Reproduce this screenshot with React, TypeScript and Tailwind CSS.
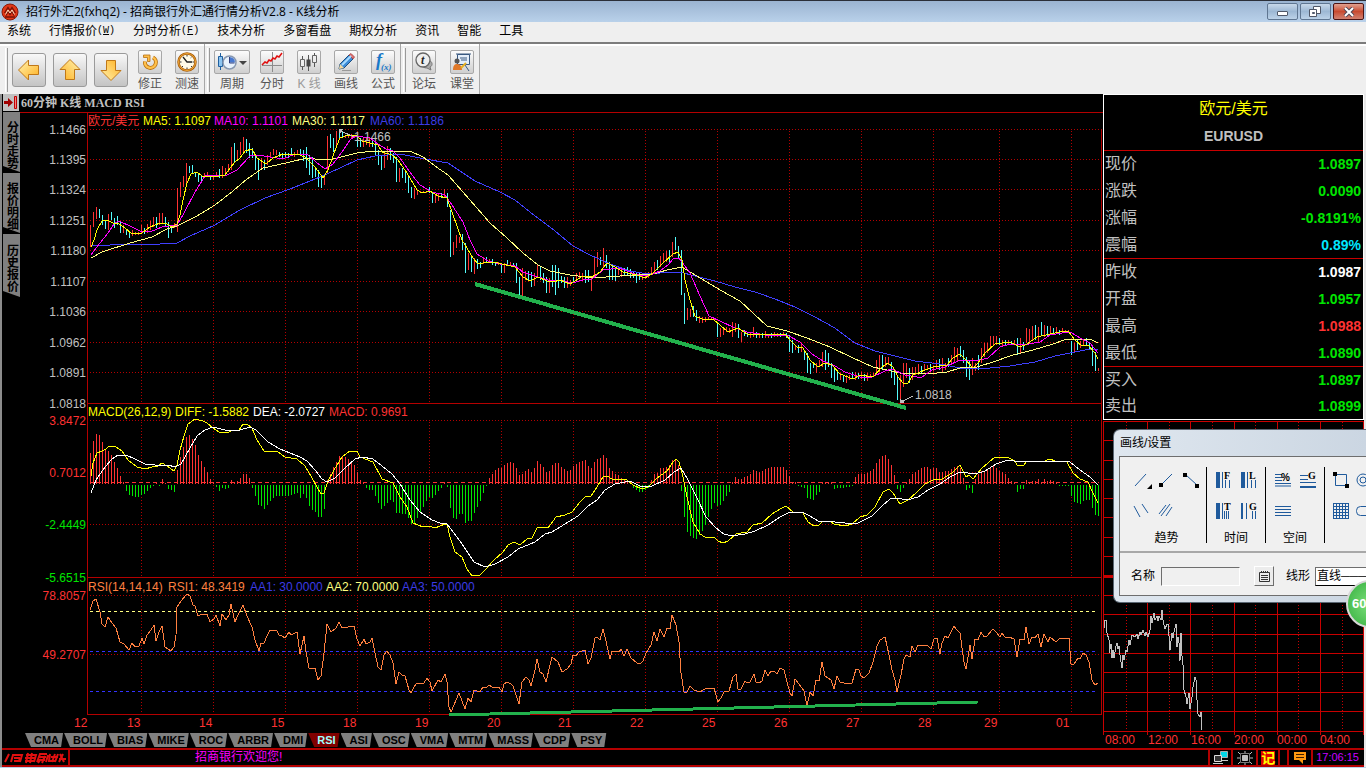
import type { ReactNode } from "react";
import clsx from "clsx";

const SANS = "font-['Liberation_Sans','Noto_Sans_CJK_SC',sans-serif]";

const menus = [
  { label: "系统" },
  { label: "行情报价", hotkey: "W" },
  { label: "分时分析", hotkey: "F" },
  { label: "技术分析" },
  { label: "多窗看盘" },
  { label: "期权分析" },
  { label: "资讯" },
  { label: "智能" },
  { label: "工具" },
];
const sideTabs = ["分时走势", "报价明细", "历史报价"];
const indicators = ["CMA", "BOLL", "BIAS", "MIKE", "ROC", "ARBR", "DMI", "RSI", "ASI", "OSC", "VMA", "MTM", "MASS", "CDP", "PSY"];

const quotes = [
  [
    { label: "现价", value: "1.0897", color: "text-[#00e600]" },
    { label: "涨跌", value: "0.0090", color: "text-[#00e600]" },
    { label: "涨幅", value: "-0.8191%", color: "text-[#00e600]" },
    { label: "震幅", value: "0.89%", color: "text-[#00e6ff]" },
  ],
  [
    { label: "昨收", value: "1.0987", color: "text-white" },
    { label: "开盘", value: "1.0957", color: "text-[#00e600]" },
    { label: "最高", value: "1.0988", color: "text-[#ff3232]" },
    { label: "最低", value: "1.0890", color: "text-[#00e600]" },
  ],
  [
    { label: "买入", value: "1.0897", color: "text-[#00e600]" },
    { label: "卖出", value: "1.0899", color: "text-[#00e600]" },
  ],
];

// hourly bars, one every 3 units: r = up, c = down, then high-low
const bars: [number, string][] = [
  [90, "r225-247 r212-227 r207-219 c209-218 c215-225 c220-229 r214-230 c212-220 c218-228 c216-225 c222-233 r225-233 c230-235 c232-238 r230-236 r232-235 r232-235 r225-233 c228-234 r224-233 r221-230 r217-227 c217-228 r213-225 r213-223 c217-227 c222-238 c225-233 r223-228 r188-232"],
  [180, "r182-197 r176-187 r163-187 c166-173 c165-173 c172-177 c173-182 c175-182 r173-178 r172-177 c175-180 r175-180 r172-177 c169-178 r166-178 r168-175 r164-172 r147-170 c143-163 r150-160 r142-155 r137-153 c139-153 c143-158 c148-158 c155-170 c160-180 r158-170 c160-170 r155-165"],
  [270, "r152-158 r149-155 r150-155 c152-157 c153-158 c152-158 c153-158 c148-155 r152-157 r150-155 c149-155 c150-161 c147-168 c155-175 c157-178 c167-177 c170-187 c175-188 r177-185 r136-173 c134-148 c138-152 r131-146 c130-140 c132-138 r135-138 r134-138 r134-138 r135-138 c137-147"],
  [360, "c138-147 r137-147 r138-145 r138-147 c139-147 c143-155 c150-165 c155-170 r153-168 r146-160 c148-160 c153-163 c157-182 r168-182 c168-178 c172-183 c175-193 c187-198 r188-199 r190-195 r191-193 r191-193 r191-193 c187-193 c192-203 r195-203 r194-201 c193-198 r189-198 c193-207"],
  [450, "c210-257 r242-255 r235-248 r237-243 c234-250 c243-273 r253-270 c257-272 r258-274 c259-269 c262-268 r257-264 c257-263 r259-263 c259-265 c262-266 r262-265 c263-273 r263-273 c260-265 r262-266 c263-267 c263-283 c277-296 r268-297 r271-280 c271-281 c272-287 r273-286 r265-277"],
  [540, "c266-280 c273-283 c277-293 r278-293 c265-287 c265-295 c268-288 c276-283 c277-288 r277-288 r280-286 c277-283 r273-280 r272-279 r273-280 c270-283 c270-282 r278-291 r258-277 r252-267 c257-265 r248-268 c255-268 c262-280 c265-280 c268-281 r268-275 r267-277 c268-276 c267-275"],
  [630, "c269-278 c272-278 c273-283 c273-280 r275-280 r275-279 r272-278 r267-275 r262-273 c260-270 r256-267 r253-263 r251-262 c250-262 r242-257 c237-250 c246-258 c250-295 c293-324 r308-320 r309-317 c306-317 c310-321 r316-323 r317-323 r317-322 r317-320 r318-320 r318-320 c324-337"],
  [720, "r328-337 r327-335 r327-332 r328-333 r322-337 r323-332 c324-338 r332-342 c330-336 c332-337 r333-338 r327-337 c332-338 r333-338 c333-338 r331-338 r334-338 c333-338 r332-337 r333-337 c333-337 r332-336 c333-338 c335-352 c340-353 r345-350 c345-353 r343-352 c350-360 c353-373"],
  [810, "c363-374 c362-368 r363-373 r360-367 r352-367 c350-370 c353-367 c363-378 c367-382 c370-380 r373-380 c375-382 r375-383 r375-380 c372-378 r372-380 c373-379 r372-379 c374-381 r373-381 r374-378 r373-377 r360-375 r355-372 c355-370 r357-367 r357-365 c362-378 c372-385 c377-400"],
  [900, "r375-402 r363-387 r363-378 c368-383 r367-380 r367-375 r364-375 c366-374 r364-370 r365-369 c364-370 r366-371 r360-368 c359-370 r358-372 r363-370 c358-367 r355-365 r347-363 r348-362 c346-357 c350-363 c357-377 c360-380 r358-375 r363-371 c355-370 r348-363 r343-357 r343-353"],
  [990, "r336-347 r336-346 r336-345 c338-345 r340-346 c340-345 r340-345 c341-345 r340-345 c338-355 r338-353 c342-350 r328-343 r329-344 r326-340 c325-340 r327-342 c322-335 r325-337 c326-337 r326-335 c328-335 r327-334 c330-335 r328-333 r330-333 r330-333 c341-355 r343-353 c340-350"],
  [1080, "r341-348 r340-346 c338-345 c342-350 c345-366 c352-371 r368-371"],
];

// MACD column ends, baseline at 484: smaller is above (red), larger is below (green)
const macd =
  "453 441 434 435 442 450 451 455 462 468 476 482 490 494 495 496 496 494 493 490 487 485 482 485 479 483 488 489 491 470 457 447 437 435 439 445 455 461 467 472 479 482 486 490 487 488 487 480 482 481 478 474 474 478 487 495 504 505 508 504 500 497 495 495 495 495 495 494 493 492 497 493 497 505 509 511 516 516 508 480 474 467 462 456 456 457 459 462 465 472 480 482 487 489 489 495 502 508 505 502 499 501 512 512 513 513 517 523 522 517 512 506 500 496 497 494 490 487 482 486 507 517 518 513 513 522 520 520 512 506 500 492 485 478 474 470 468 468 465 463 462 463 468 475 474 471 469 472 468 461 464 467 472 471 465 463 463 467 469 471 470 466 464 462 461 460 466 468 462 459 458 455 458 468 471 474 475 478 480 481 482 487 489 491 491 489 487 480 474 473 468 468 467 465 460 459 465 490 516 531 535 537 538 534 530 524 516 508 502 505 504 500 495 491 482 477 479 479 477 476 474 470 471 472 471 469 468 467 467 467 467 467 470 476 482 482 485 486 487 497 498 499 494 491 482 482 482 482 488 487 487 487 486 486 485 477 474 474 474 473 471 469 463 459 456 455 459 465 475 488 491 487 482 479 474 472 470 468 467 467 469 468 468 472 472 471 471 469 467 466 468 478 489 487 492 479 474 471 471 470 468 466 468 471 472 474 478 481 483 491 488 488 480 482 481 481 479 482 479 481 480 481 482 485 485 485 485 495 501 502 503 500 499 499 507 514 515"
    .split(" ")
    .map(Number);

const MA5 =
  "91,247 94,240 97,230 102,221 107,220 113,223 119,224 125,228 132,234 142,233 150,227 160,223 167,224 172,227 177,224 180,215 183,200 187,183 191,174 197,172 202,176 213,177 225,175 230,168 235,162 240,158 245,151 252,149 257,158 266,164 273,158 283,154 297,154 305,157 315,167 323,178 328,170 337,145 340,138 348,135 357,136 362,141 370,143 378,145 382,152 392,155 398,160 407,173 417,190 422,193 430,191 438,196 447,198 452,212 462,240 473,258 478,264 488,262 498,263 515,267 523,277 530,281 538,277 547,281 553,282 560,280 570,284 583,276 592,277 600,272 607,263 615,267 623,272 637,275 645,278 653,273 663,263 673,254 678,252 682,260 685,280 690,300 695,316 702,319 713,319 720,325 728,332 738,328 747,334 763,335 785,334 790,340 797,347 803,348 810,360 818,367 825,363 832,365 840,374 853,379 860,375 873,377 882,367 888,363 893,367 898,377 903,383 908,383 913,375 925,370 933,367 947,365 953,358 960,354 965,359 973,368 978,363 985,353 995,344 1010,342 1020,347 1027,344 1037,337 1050,334 1060,332 1068,331 1075,340 1082,346 1088,345 1095,353 1098,359";
const MA10 =
  "91,255 100,243 108,233 114,224 119,221 130,226 140,231 150,232 162,227 177,225 184,213 195,192 205,176 215,175 225,176 237,170 250,156 258,155 270,157 283,159 295,154 308,155 316,162 325,169 333,164 342,152 350,140 355,136 370,138 378,144 386,149 393,151 400,158 412,175 420,185 432,192 445,195 452,205 463,222 470,240 477,254 488,261 500,264 515,266 523,272 535,276 548,280 560,280 572,283 583,280 592,279 603,270 620,268 632,273 642,276 650,275 660,271 668,265 673,259 679,258 690,273 700,296 709,316 720,321 735,328 747,332 765,335 787,335 800,342 812,354 823,361 835,366 845,372 860,377 872,377 885,371 892,369 905,375 917,377 922,377 932,370 945,367 960,360 975,361 988,358 1000,347 1010,344 1023,345 1040,342 1050,335 1062,333 1070,332 1082,339 1090,343 1098,353";
const MA30 =
  "91,258 102,252 130,243 152,237 167,229 177,226 197,216 215,205 233,191 247,179 263,168 277,165 290,162 307,158 323,160 333,159 357,153 373,151 390,151 410,151 423,157 435,166 448,175 470,200 490,223 507,238 523,253 538,265 550,271 570,275 593,278 620,276 653,274 667,270 682,267 690,272 707,282 720,290 740,301 753,313 767,326 787,331 807,338 830,347 853,358 873,367 900,373 927,374 947,372 960,368 977,367 993,362 1013,355 1033,350 1053,344 1067,339 1090,339 1098,343";
const MA60 =
  "91,245 110,245 120,244 140,245 160,244 177,243 190,236 215,225 240,210 265,198 290,189 320,177 340,168 357,160 375,156 400,154 425,159 448,163 475,181 500,192 515,200 530,212 555,231 573,246 590,255 610,264 630,271 648,274 660,273 680,272 695,276 715,281 735,287 755,292 775,299 795,307 815,317 835,328 855,343 875,351 895,356 915,361 940,364 960,368 990,368 1010,366 1035,362 1055,356 1070,353 1085,350 1098,349";
const DIFF =
  "91,476 93,463 97,453 102,451 106,449 109,446 116,447 122,451 128,460 137,467 145,469 152,467 158,466 162,463 167,466 174,471 177,465 180,450 184,436 188,424 195,419 203,421 207,423 213,428 219,432 228,433 232,430 239,430 243,424 247,424 252,428 257,440 264,451 277,451 285,457 297,459 305,466 312,478 317,487 321,494 324,493 328,481 334,470 342,457 350,451 357,451 360,457 373,462 382,479 393,483 400,497 407,507 413,523 423,527 429,526 435,528 445,524 447,524 450,537 455,552 462,557 467,569 472,576 480,575 487,568 493,561 503,552 508,545 514,542 520,545 527,539 532,538 537,528 543,527 548,528 556,517 565,515 572,512 580,502 586,496 591,496 597,487 603,477 607,476 612,479 627,480 633,485 642,489 648,487 657,478 667,471 673,462 676,459 679,462 683,477 687,497 693,522 700,534 705,537 714,537 718,541 723,543 728,541 736,534 747,532 753,525 762,523 772,514 780,509 786,506 793,512 803,513 808,522 814,526 819,525 823,521 830,521 834,524 845,526 852,524 860,517 867,515 875,507 883,492 889,489 893,493 900,504 908,500 917,492 925,484 933,480 942,479 952,473 960,465 966,477 969,475 973,479 982,468 988,463 995,457 1007,457 1015,461 1017,465 1024,465 1027,461 1038,461 1042,462 1050,459 1055,461 1067,462 1073,473 1080,479 1088,482 1093,493 1098,503";
const DEA =
  "91,493 96,480 105,467 112,459 118,455 126,455 135,459 145,464 155,465 168,465 175,467 181,464 190,448 197,436 205,430 213,427 225,430 232,431 240,430 250,427 256,430 268,442 280,449 290,453 300,457 307,461 315,470 322,479 327,482 335,478 345,468 355,459 362,457 373,459 382,466 392,474 400,484 410,500 420,512 432,520 440,523 447,524 460,541 474,562 485,567 495,564 508,557 518,549 535,542 545,534 552,532 565,524 578,516 588,506 597,500 605,490 615,484 630,481 640,486 652,486 665,480 674,472 681,468 688,480 698,500 706,517 716,528 724,534 732,536 745,534 755,531 768,525 780,517 790,512 802,512 810,516 818,521 835,522 845,523 858,523 872,516 882,506 890,499 897,498 907,500 918,497 928,490 940,484 950,477 960,472 975,474 985,471 996,464 1008,460 1020,462 1040,461 1055,461 1070,462 1080,470 1090,477 1098,485";
const RSI =
  "90,610 93,601 96,599 100,612 102,624 105,627 108,617 112,623 116,628 120,642 124,644 129,650 132,643 135,647 139,646 142,638 144,644 147,635 151,630 154,625 156,641 159,632 162,626 165,647 171,651 174,647 176,635 177,607 181,601 187,594 190,596 193,605 195,606 198,616 202,614 207,614 210,622 214,619 216,615 220,626 222,614 226,620 229,615 231,604 235,622 237,617 240,611 243,605 247,616 252,627 255,640 259,651 261,643 264,643 267,636 270,630 277,631 279,635 282,636 285,638 289,632 291,635 297,632 300,654 304,636 306,652 309,668 315,668 318,680 321,676 324,653 327,624 331,632 336,628 339,622 342,628 354,626 357,639 360,646 364,639 366,644 370,642 372,638 375,653 378,667 381,670 384,655 387,651 390,655 393,663 396,684 399,672 402,675 405,676 409,690 411,693 414,687 417,683 424,683 427,678 430,682 432,691 438,680 441,682 445,674 447,682 449,707 451,712 454,705 459,693 465,709 468,698 471,702 474,690 480,692 483,687 486,688 489,685 492,687 499,687 502,692 504,684 507,682 511,684 513,686 519,704 522,682 526,677 529,680 531,686 535,670 537,659 540,672 543,674 546,682 552,657 558,662 562,672 567,669 571,664 573,655 576,656 579,652 585,650 588,664 591,658 595,638 597,637 600,640 603,629 606,641 610,659 612,651 619,652 621,649 624,656 627,649 631,658 637,663 640,664 643,661 646,653 651,645 654,632 657,641 660,629 664,637 667,628 670,629 672,615 676,625 679,642 681,673 684,692 687,692 690,686 694,690 700,692 705,689 714,688 718,702 721,698 724,692 729,691 733,677 736,674 738,689 741,689 745,681 747,683 750,682 754,674 756,682 759,683 762,681 765,670 768,676 771,671 774,671 777,674 780,668 784,670 787,682 790,693 792,696 795,679 799,684 804,691 807,706 810,692 813,696 816,680 819,681 822,662 825,676 831,680 834,689 837,676 840,682 844,683 852,683 856,669 859,670 861,676 864,678 869,673 873,662 877,646 880,640 885,637 889,655 892,670 895,680 897,692 901,675 904,659 906,655 910,657 912,646 915,652 918,645 923,645 927,645 931,649 934,639 937,638 940,654 942,643 945,636 948,638 954,626 957,630 960,633 964,662 966,669 970,645 972,659 975,639 978,640 981,632 984,637 987,636 993,629 996,632 1000,637 1002,633 1005,637 1009,637 1014,639 1017,657 1020,639 1024,640 1026,627 1029,644 1032,637 1035,638 1038,634 1041,647 1044,634 1048,642 1050,637 1056,642 1060,638 1069,638 1071,664 1074,664 1078,658 1080,659 1083,653 1086,655 1089,662 1092,680 1095,685 1098,683";
const DAY =
  "1104,628 1104,621 1106,620 1107,633 1109,640 1109,653 1111,644 1112,658 1113,650 1114,658 1116,646 1117,643 1118,649 1119,646 1120,655 1122,668 1123,655 1124,660 1126,650 1127,652 1129,640 1130,645 1132,635 1135,637 1137,634 1138,639 1140,632 1141,635 1143,630 1145,636 1146,632 1148,637 1150,630 1151,616 1152,623 1154,613 1155,620 1157,616 1158,621 1159,616 1161,620 1162,610 1163,620 1165,629 1167,624 1168,624 1169,636 1170,650 1172,633 1173,638 1174,632 1176,624 1177,647 1178,637 1179,643 1180,661 1181,633 1182,656 1183,665 1184,690 1186,697 1187,704 1189,693 1190,709 1192,697 1193,687 1195,677 1196,680 1197,700 1198,714 1200,717 1201,712 1202,730";

const days: [number, string][] = [
  [74, "12"], [127, "13"], [199, "14"], [271, "15"], [343, "18"], [415, "19"], [487, "20"], [558, "21"],
  [630, "22"], [702, "25"], [774, "26"], [846, "27"], [918, "28"], [984, "29"], [1056, "01"],
];
const dayLines = [141, 213, 285, 357, 429, 501, 573, 645, 717, 789, 861, 933, 999, 1071];
const prices: [number, string][] = [
  [129, "1.1466"], [159, "1.1395"], [189, "1.1324"], [220, "1.1251"], [250, "1.1180"],
  [281, "1.1107"], [311, "1.1036"], [342, "1.0962"], [372, "1.0891"], [403, "1.0818"],
];

function Label({ x, y, fill, end, children }: { x: number; y: number; fill: string; end?: boolean; children: ReactNode }) {
  return (
    <text x={x} y={y} fill={fill} textAnchor={end ? "end" : "start"}>
      {children}
    </text>
  );
}

function Charts() {
  return (
    <svg viewBox="20 113 1083 620" className={clsx("block w-full text-[12px]", SANS)}>
      <g stroke="#b40000" shapeRendering="crispEdges" fill="none">
        <g strokeDasharray="1 2">
          {prices.slice(0, 9).map(([y]) => (
            <path key={y} d={`M90 ${y + 0.5}H1099`} />
          ))}
          {[420, 472, 524, 595, 654].map((y) => (
            <path key={y} d={`M90 ${y + 0.5}H1099`} />
          ))}
          {dayLines.map((x) => (
            <path key={x} d={`M${x + 0.5} 131V403M${x + 0.5} 422V577M${x + 0.5} 597V714`} />
          ))}
        </g>
        <path d="M87.5 113V714.5H1101.5V129M88 403.5H1101M88 577.5H1101" />
      </g>

      <g shapeRendering="crispEdges">
        {bars.map(([start, list]) =>
          list.split(" ").map((bar, i) => {
            const [hi, lo] = bar.slice(1).split("-").map(Number);
            return (
              <rect key={start + i * 3} x={start + i * 3} y={hi} width="1" height={lo - hi} fill={bar[0] === "r" ? "#ff3232" : "#54fcfc"} />
            );
          })
        )}
        {macd.map((y, i) => (
          <rect key={i} x={90 + i * 3} y={Math.min(y, 485)} width="1" height={y < 485 ? 484 - y : y - 484} fill={y < 485 ? "#ff3232" : "#00e600"} />
        ))}
        <path d="M90 482.5H1099" stroke="#ff3232" strokeDasharray="4 3" />
        <path d="M90 611.5H1096" stroke="#ffff80" strokeDasharray="3 3" />
        <path d="M90 651.5H1096M90 691.5H1096" stroke="#3232ff" strokeDasharray="3 3" />
        <g fill="none">
          <polyline points={MA60} stroke="#4040ff" />
          <polyline points={MA30} stroke="#ffff80" />
          <polyline points={MA10} stroke="#ff00ff" />
          <polyline points={MA5} stroke="#ffff00" />
          <polyline points={DIFF} stroke="#ffff00" />
          <polyline points={DEA} stroke="#ffffff" />
          <polyline points={RSI} stroke="#ff8040" />
        </g>
        <g stroke="#22b14c">
          <path d="M475 284L906 408" strokeWidth="4" />
          <path d="M449 715L978 702" strokeWidth="3" />
        </g>
        <g stroke="#c0c0c0" fill="#c0c0c0">
          <path d="M341 131L354 137M901 402L913 396" />
          <path d="M339 129h4l-3 4zM900 399v4l4 -1z" />
        </g>
      </g>

      {prices.map(([y, t]) => (
        <Label key={t} x={86} y={y + 5} fill="#c0c0c0" end>
          {t}
        </Label>
      ))}
      <Label x={86} y={425} fill="#ff3232" end>3.8472</Label>
      <Label x={86} y={477} fill="#ff3232" end>0.7012</Label>
      <Label x={86} y={529} fill="#00e600" end>-2.4449</Label>
      <Label x={86} y={582} fill="#00e600" end>-5.6515</Label>
      <Label x={86} y={600} fill="#ff3232" end>78.8057</Label>
      <Label x={86} y={659} fill="#ff3232" end>49.2707</Label>

      <Label x={88} y={125} fill="#ff3232">欧元/美元</Label>
      <Label x={143} y={125} fill="#ffff00">MA5: 1.1097</Label>
      <Label x={214} y={125} fill="#ff00ff">MA10: 1.1101</Label>
      <Label x={292} y={125} fill="#ffff80">MA30: 1.1117</Label>
      <Label x={370} y={125} fill="#3c3ce6">MA60: 1.1186</Label>
      <Label x={354} y={141} fill="#c0c0c0">1.1466</Label>
      <Label x={915} y={399} fill="#c0c0c0">1.0818</Label>

      <Label x={88} y={416} fill="#ffff00">MACD(26,12,9)</Label>
      <Label x={175} y={416} fill="#ffff00">DIFF: -1.5882</Label>
      <Label x={253} y={416} fill="#ffffff">DEA: -2.0727</Label>
      <Label x={329} y={416} fill="#ff3232">MACD: 0.9691</Label>

      <Label x={88} y={591} fill="#ff8040">RSI(14,14,14)</Label>
      <Label x={168} y={591} fill="#ff8040">RSI1: 48.3419</Label>
      <Label x={250} y={591} fill="#3c3ce6">AA1: 30.0000</Label>
      <Label x={326} y={591} fill="#ffff80">AA2: 70.0000</Label>
      <Label x={402} y={591} fill="#3c3ce6">AA3: 50.0000</Label>

      {days.map(([x, t]) => (
        <Label key={t} x={x} y={727} fill="#ff3232">
          {t}
        </Label>
      ))}
    </svg>
  );
}

function DayChart() {
  return (
    <svg viewBox="1103 420 261 328" className={clsx("block w-full text-[12px]", SANS)}>
      <g stroke="#c80000" shapeRendering="crispEdges" fill="none">
        {[421, 440, 460, 479, 498, 517, 537, 556, 595, 614, 634, 653, 672, 692, 711, 731].map((y) => (
          <path key={y} d={`M1103 ${y + 0.5}H1364`} />
        ))}
        <path d="M1103 576H1364" strokeWidth="3" />
        {[1103, 1147, 1190, 1234, 1277, 1320, 1363].map((x) => (
          <path key={x} d={`M${x + 0.5} 421V735`} />
        ))}
        {[1126, 1169, 1212, 1255, 1298, 1342].map((x) => (
          <path key={x} d={`M${x + 0.5} 422V731`} strokeDasharray="1 2" />
        ))}
        <polyline points={DAY} stroke="#c0c0c0" />
      </g>
      {["08:00", "12:00", "16:00", "20:00", "00:00", "04:00"].map((t, i) => (
        <Label key={t} x={1105 + i * 43} y={744} fill="#ff3232">
          {t}
        </Label>
      ))}
    </svg>
  );
}

function WindowButton({ label, close, children }: { label: string; close?: boolean; children: ReactNode }) {
  return (
    <button
      aria-label={label}
      className={clsx(
        "flex h-[17px] w-[31px] items-center justify-center rounded-[2px] border",
        close
          ? "border-[#4c1414] bg-linear-to-b from-[#e0a090] via-[#c84a30] to-[#d08070]"
          : "border-[#5f7691] bg-linear-to-b from-[#c8d8e9] via-[#9db8d4] to-[#bcd2e8]"
      )}
    >
      {children}
    </button>
  );
}

function TitleBar() {
  return (
    <header className="flex h-[22px] items-center border-t border-[#2b2f38] bg-linear-to-b from-[#9bb4d1] to-[#b9d1ea] pl-px pr-[2px]">
      <svg width="18" height="18" viewBox="0 0 18 18" className="mr-[7px]">
        <circle cx="9" cy="9" r="8" fill="#e03818" stroke="#8a1a08" />
        <path d="M3.5 10L7 4.500L9 7.500L11 4.500L14.500 10M5 12.500L7 8.500L9 11.500L11 8.500L13 12.500M4 14H14" fill="none" stroke="#7a1206" strokeWidth="1.300" />
        <path d="M4.500 11.500L7 7L9 10L11 7L13.500 11.500" fill="none" stroke="#fbe0c0" strokeWidth="1" />
      </svg>
      <h1 className="flex-1 font-['Open_Sans','Noto_Sans_CJK_SC',sans-serif] text-[12px] leading-[20px] whitespace-nowrap text-black">
        招行外汇2(fxhq2) - 招商银行外汇通行情分析V2.8 - K线分析
      </h1>
      <div className="flex gap-[2px]">
        <WindowButton label="最小化">
          <span className="mt-1 h-[5px] w-[11px] rounded-[1px] border border-[#505868] bg-white" />
        </WindowButton>
        <WindowButton label="还原">
          <svg width="13" height="12" viewBox="0 0 13 12" fill="#fff" stroke="#505868">
            <path d="M4.500 0.500h7v7h-7z" />
            <path d="M0.500 3.500h7v7h-7z" />
            <path d="M3.500 6.500h2v1h-2z" fill="#9db8d4" />
          </svg>
        </WindowButton>
        <WindowButton label="关闭" close>
          <svg width="12" height="10" viewBox="0 0 12 10">
            <path d="M2 1L10 9M10 1L2 9" stroke="#504858" strokeWidth="4" />
            <path d="M2 1L10 9M10 1L2 9" stroke="#fff" strokeWidth="2" />
          </svg>
        </WindowButton>
      </div>
    </header>
  );
}

function ArrowButton({ label, rotate }: { label: string; rotate: string }) {
  return (
    <button aria-label={label} className="flex size-[34px] items-center justify-center rounded-[3px] border border-[#9a9a9a] bg-linear-to-b from-[#f8f8f8] to-[#c4c4c4]">
      <svg width="24" height="24" viewBox="0 0 24 24" className={rotate}>
        <defs>
          <linearGradient id={`arrow-${label}`} x1="0" y1="0" x2="1" y2="1">
            <stop offset="0" stopColor="#fff3b0" />
            <stop offset="1" stopColor="#ffb020" />
          </linearGradient>
        </defs>
        <path d="M1.500 12L11.500 2V7.500H21.500V16.500H11.500V22Z" fill={`url(#arrow-${label})`} stroke="#c07818" strokeLinejoin="round" />
      </svg>
    </button>
  );
}

function ToolButton({ label, wide, dim, children }: { label: string; wide?: boolean; dim?: boolean; children: ReactNode }) {
  return (
    <button className="flex flex-col items-center">
      <span
        className={clsx(
          "flex h-[24px] items-center justify-center rounded-[2px] border border-[#a8a8a8] bg-linear-to-b from-[#fcfcfc] to-[#cfcfcf]",
          wide ? "w-[36px]" : "w-[24px]"
        )}
      >
        {children}
      </span>
      <span className={clsx("pt-[2px] text-[12px] leading-[16px] whitespace-nowrap", dim ? "text-[#9a9a9a]" : "text-[#555]")}>{label}</span>
    </button>
  );
}

function Grip() {
  return <span className="h-[44px] w-[3px] border-r border-l border-r-[#9a9a9a] border-l-white" />;
}

function Toolbar() {
  return (
    <div className="flex h-[52px] border-t-2 border-[#7c7c7c] bg-[#efefef] pl-[2px] shadow-[inset_0_2px_0_#fff]">
      <div className="flex items-start border-r border-[#a8a8a8] pt-[4px] pr-[5px] pl-[3px]">
        <Grip />
        <div className="ml-[4px] flex gap-[7px] pt-[5px]">
          <ArrowButton label="后退" rotate="" />
          <ArrowButton label="向上" rotate="rotate-90" />
          <ArrowButton label="向下" rotate="-rotate-90" />
        </div>
        <div className="ml-[10px] flex gap-[13px] pt-[2px]">
          <ToolButton label="修正">
            <svg width="18" height="18" viewBox="0 0 18 18">
              <path d="M12 4.500a5.500 5.500 0 1 1 -8 4" fill="none" stroke="#b87010" strokeWidth="4" />
              <path d="M12 4.500a5.500 5.500 0 1 1 -8 4" fill="none" stroke="#ffc04a" strokeWidth="2.400" />
              <path d="M2.500 2h6.500v6.500H6.500V4.500H2.500z" fill="#ffc04a" stroke="#b87010" strokeWidth="0.800" />
            </svg>
          </ToolButton>
          <ToolButton label="测速">
            <svg width="20" height="20" viewBox="0 0 20 20">
              <circle cx="10" cy="10" r="8.500" fill="#fffbe8" stroke="#a85c08" strokeWidth="2.500" />
              <circle cx="10" cy="10" r="8.500" fill="none" stroke="#f0a838" />
              <path d="M6 5l4 5h5" fill="none" stroke="#222" strokeWidth="1.300" />
              <path d="M10 3v1.500M10 15.500V17M3 10h1.500M15.500 10H17M14.500 5l-.8.8M5 15l1-1M15 15l-1-1" stroke="#333" />
            </svg>
          </ToolButton>
        </div>
      </div>
      <div className="flex items-start border-r border-[#a8a8a8] pt-[4px] pr-[5px] pl-[2px]">
        <Grip />
        <div className="ml-[4px] flex pt-[2px]">
          <ToolButton label="周期" wide>
            <svg width="32" height="20" viewBox="0 0 32 20">
              <path d="M4.500 1v17" stroke="#2060a0" />
              <path d="M2.500 4.500h4v10h-4z" fill="#8cc4f0" stroke="#2060a0" />
              <circle cx="13.500" cy="10.500" r="6.500" fill="#e8f2fc" stroke="#8898b0" strokeWidth="1.500" />
              <path d="M13.500 10.500V5a5.500 5.500 0 0 1 5.500 5.500z" fill="#4878d0" />
              <path d="M13.500 5v6h5" stroke="#304080" fill="none" />
              <path d="M23 9h8l-4 4z" fill="#444" />
            </svg>
          </ToolButton>
          <div className="ml-[10px] flex gap-[13px]">
            <ToolButton label="分时">
              <svg width="22" height="22" viewBox="0 0 22 22">
                <path d="M11.500 1v20M1 14.500h20" stroke="#8c8c8c" />
                <path d="M1 14l3-3 2 1 2-3 2 1 2-3 2 1 2-3 2 1 3-4" fill="none" stroke="#e01010" strokeWidth="1.500" />
              </svg>
            </ToolButton>
            <ToolButton label="K 线" dim>
              <svg width="20" height="20" viewBox="0 0 20 20">
                <path d="M3.500 4v14M9.500 3v16M15.500 1v14" stroke="#555" />
                <path d="M1.500 7.500h4v7h-4zM13.500 3.500h4v7h-4z" fill="#eee" stroke="#666" />
                <path d="M7.500 7.500h4v7h-4z" fill="#444" />
              </svg>
            </ToolButton>
            <ToolButton label="画线">
              <svg width="20" height="20" viewBox="0 0 20 20">
                <path d="M4 12L13 3l4 4-9 9-5 1z" fill="#3c8cd8" stroke="#205080" />
                <path d="M13 3l2-1.500L18.500 5 17 7z" fill="#e07070" stroke="#a04040" strokeWidth="0.800" />
                <path d="M6 13l9-9" stroke="#a8dcff" strokeWidth="2" />
                <path d="M4 12l4 4-5 1z" fill="#f4d8a0" />
                <path d="M6 18.500h9" stroke="#999" />
              </svg>
            </ToolButton>
            <ToolButton label="公式">
              <svg width="22" height="22" viewBox="0 0 22 22" fill="#1878c8" className="font-['Liberation_Serif',serif] font-bold italic">
                <text x="4" y="15" fontSize="18">f</text>
                <text x="9" y="19" fontSize="9">(x)</text>
              </svg>
            </ToolButton>
          </div>
        </div>
      </div>
      <div className="flex items-start border-r border-[#a8a8a8] pt-[4px] pr-[5px] pl-[2px]">
        <Grip />
        <div className="ml-[6px] flex gap-[14px] pt-[2px]">
          <ToolButton label="论坛">
            <svg width="20" height="20" viewBox="0 0 20 20">
              <path d="M14 8c5 1 5 6 2 7l1 3-4-2c-3 0-5-1-5-4z" fill="#aaa" stroke="#777" />
              <circle cx="9" cy="8" r="7" fill="#eee" stroke="#666" strokeWidth="1.300" />
              <text x="7" y="12" fontSize="12" fill="#222" className="font-['Liberation_Serif',serif] font-bold italic">t</text>
            </svg>
          </ToolButton>
          <ToolButton label="课堂">
            <svg width="20" height="20" viewBox="0 0 20 20">
              <path d="M5.500 2.500h12v10h-12z" fill="#e4eefa" stroke="#385880" />
              <path d="M4 2h15M8 6h7M9 8h6M13 13l4 6" stroke="#385880" />
              <circle cx="5" cy="9" r="2.500" fill="#555" />
              <path d="M1 18c0-5 2-6 4-6s5 1 5 6z" fill="#e07828" />
              <path d="M9 16l5-5" stroke="#e8b020" strokeWidth="2" />
            </svg>
          </ToolButton>
        </div>
      </div>
    </div>
  );
}

function Tool({ label, children }: { label: string; children: ReactNode }) {
  return (
    <button aria-label={label} className="flex size-[22px] items-center justify-center">
      <svg width="20" height="20" viewBox="0 0 20 20" fill="none" stroke="#1f5a9c">
        {children}
      </svg>
    </button>
  );
}

function Letter({ children }: { children: string }) {
  return (
    <text x="10" y="9" fontSize="10" fill="#000" stroke="none" className="font-['Liberation_Serif',serif] font-bold">
      {children}
    </text>
  );
}

function ToolGroup({ title, wide, children }: { title: string; wide?: boolean; children: ReactNode }) {
  return (
    <div className={clsx("flex h-[76px] shrink-0 flex-col items-center border-r border-black pt-[2px]", wide ? "w-[80px]" : "w-[59px]")}>
      <div className={clsx("grid gap-x-[3px] gap-y-[9px]", wide ? "grid-cols-3" : "grid-cols-2")}>{children}</div>
      <span className="mt-[8px] text-[12px] leading-[16px]">{title}</span>
    </div>
  );
}

function DrawDialog() {
  return (
    <section
      aria-label="画线/设置"
      className="absolute top-[429px] right-0 h-[174px] w-[253px] rounded-l-[7px] border border-r-0 border-[#5a6672] bg-linear-to-r from-[#dfe7ef] to-[#cbd6e2] pl-[5px] text-black"
    >
      <h2 className="pl-px text-[12px] leading-[26px]">画线/设置</h2>
      <div className="h-[140px] overflow-hidden border border-r-0 border-[#6e6e6e] bg-[#f0f0f0]">
        <div className="flex h-[96px] items-start border-b-2 border-[#a8a8a8] pt-[10px] pl-[7px]">
          <ToolGroup title="趋势" wide>
            <Tool label="直线"><path d="M3 16L14 4" /><path d="M20 14v5h-5z" fill="#000" stroke="none" /></Tool>
            <Tool label="射线"><path d="M4 15L15 4" /><path d="M2 13h4v4H2z" fill="#000" stroke="none" /></Tool>
            <Tool label="线段"><path d="M4 5L15 15" /><path d="M1 3h4v4H1zM13 14h4v4h-4z" fill="#000" stroke="none" /></Tool>
            <Tool label="平行线"><path d="M2 5L8 16M10 3L16 12" /></Tool>
            <Tool label="通道线"><path d="M2 13L9 4M4 15L13 3M9 15L15 6" /></Tool>
          </ToolGroup>
          <div className="flex">
            <ToolGroup title="时间">
              <Tool label="斐波那契时间"><path d="M4 2v16" strokeWidth="4" /><path d="M8.500 2v16M11.500 10v8M15.500 10v8" /><Letter>F</Letter></Tool>
              <Tool label="卢卡斯时间"><path d="M4 2v16" strokeWidth="4" /><path d="M8.500 2v16M12.500 10v8M16.500 10v8" /><Letter>L</Letter></Tool>
              <Tool label="等周期"><path d="M4 2v16" strokeWidth="4" /><path d="M8.500 2v16M10.500 10v8M12.500 10v8M14.500 10v8" /><Letter>T</Letter></Tool>
              <Tool label="江恩时间"><path d="M3 2v16" strokeWidth="2" /><path d="M7.500 2v16M13.500 10v8M16.500 10v8" /><Letter>G</Letter></Tool>
            </ToolGroup>
            <ToolGroup title="空间">
              <Tool label="百分比"><path d="M2 4.500h7M2 7.500h7M2 10.500h7M2 13.500h16M2 16h16" /><text x="8" y="11" fontSize="10" fill="#000" stroke="none" className="font-bold">%</text></Tool>
              <Tool label="黄金分割"><path d="M2 5.500h8M2 9.500h8M2 12.500h16" /><path d="M2 17h16" strokeWidth="2" /><Letter>G</Letter></Tool>
              <Tool label="等分线"><path d="M2 5.500h16M2 8.500h16M2 11.500h16M2 14.500h16" /></Tool>
            </ToolGroup>
            <div className="grid w-[50px] shrink-0 grid-cols-2 content-start gap-x-[3px] gap-y-[9px] pt-[2px] pl-[5px]">
              <Tool label="矩形"><path d="M4.500 4.500h11v11h-11z" /><path d="M2 2h4v4H2zM14 14h4v4h-4z" fill="#000" stroke="none" /></Tool>
              <Tool label="圆"><circle cx="8" cy="10" r="6" /><circle cx="8" cy="10" r="3" /></Tool>
              <Tool label="网格"><path d="M2.500 2v16M5.500 2v16M8.500 2v16M11.500 2v16M14.500 2v16M17.500 2v16M2 2.500h16M2 5.500h16M2 8.500h16M2 11.500h16M2 14.500h16M2 17.500h16" /></Tool>
              <Tool label="椭圆"><rect x="1.500" y="5.500" width="16" height="9" rx="4" /></Tool>
            </div>
          </div>
        </div>
        <div className="flex items-center pt-[13px] pl-[11px] text-[12px] leading-[16px] whitespace-nowrap">
          <label htmlFor="line-name">名称</label>
          <input id="line-name" className="ml-[6px] h-[19px] w-[79px] shrink-0 border border-t-[#6e6e6e] border-r-white border-b-white border-l-[#6e6e6e] bg-[#f0f0f0] px-1" />
          <button aria-label="备注" className="ml-[14px] flex size-[20px] shrink-0 items-center justify-center border border-t-white border-r-[#6e6e6e] border-b-[#6e6e6e] border-l-white bg-[#ececec]">
            <svg width="13" height="13" viewBox="0 0 13 13" fill="none" stroke="#333">
              <path d="M1.500 2.500h10v9h-10zM3 5.500h7M3 7.500h7M3 9.500h7M3.500 1v2M5.500 1v2M7.500 1v2M9.500 1v2" />
            </svg>
          </button>
          <label htmlFor="line-shape" className="ml-[12px]">线形</label>
          <select id="line-shape" className="ml-[5px] h-[19px] w-[70px] shrink-0 appearance-none border border-t-[#6e6e6e] border-l-[#6e6e6e] bg-white pl-px">
            <option>直线────</option>
          </select>
        </div>
      </div>
    </section>
  );
}

function StatusBar() {
  return (
    <footer className="flex h-[19px] items-stretch border-y-2 border-[#b40000] bg-black text-[12px] leading-[15px]">
      <div className="flex w-[68px] items-center border-r-2 border-[#b40000] pl-[2px]">
        <svg width="62" height="12" viewBox="0 0 62 12" fill="none" stroke="#e01010" strokeWidth="2">
          <path d="M1 10L5 2M7 10L9 3H18L16 10M10 6H16M10 9H15L16 6M22 3H32L30 10M21 6H32M21 9H31M24 1L22 11M28 1L26 11M33 10L36 2H43M34 5H42M33 8H41M37 7L34 11M41 4L38 11M44 3L42 10M46 2L45 9H51M47 5H54M51 2L48 10M54 2L51 10M56 2L60 10M55 7H62M59 2L55 10" />
        </svg>
      </div>
      <p className="flex-1 pl-[125px] text-[#ff00ff]">招商银行欢迎您!</p>
      <div className="flex w-[23px] items-center justify-center border-l-2 border-[#b40000]">
        <svg width="16" height="14" viewBox="0 0 16 14">
          <path d="M7.500 0.500h7v6h-7z" fill="#00d8e8" stroke="#aaa" />
          <path d="M1.500 4.500h7v6h-7z" fill="#333" stroke="#ddd" />
          <path d="M0 12.500h10M9 9.500h6" stroke="#ccc" />
        </svg>
      </div>
      <div className="flex w-[25px] items-center justify-center border-l-2 border-[#b40000]">
        <svg width="16" height="14" viewBox="0 0 16 14" stroke="#c0c0c0">
          <path d="M5.500 4.500h5v5h-5z" fill="#c0c0c0" />
          <path d="M3.500 2.500h9v9h-9z" fill="none" stroke="#777" />
          <path d="M8 0v2M8 12v2M0 7h3M13 7h3M1 1l2 2M13 3l2-2M1 13l2-2M13 11l2 2" />
        </svg>
      </div>
      <div className="flex w-[22px] items-center justify-center border-l-2 border-[#b40000]">
        <span className="bg-[#e00000] text-[14px] leading-[14px] font-bold text-[#ffff00]">记</span>
      </div>
      <div className="w-[9px] border-l-2 border-[#b40000]" />
      <div className="flex w-[24px] items-center justify-center border-l-2 border-[#b40000]">
        <svg width="12" height="12" viewBox="0 0 12 12">
          <path d="M0 0h12v8H9v4L5 8H0z" fill="#ff9a10" />
          <path d="M2 2.500h8M2 5.500h8" stroke="#402000" />
        </svg>
      </div>
      <time className="border-l-2 border-[#b40000] pr-[5px] pl-[3px] text-[11px] text-[#c800ff]">17:06:15</time>
    </footer>
  );
}

export default function App() {
  return (
    <div className={clsx("relative min-h-screen overflow-hidden bg-black", SANS)}>
      <TitleBar />
      <nav className="flex h-[20px] items-start gap-[18px] bg-[#efefef] pl-[7px] text-[12px] leading-[18px] text-black">
        {menus.map((m) => (
          <button key={m.label} className="flex whitespace-nowrap">
            {m.label}
            {m.hotkey && (
              <span className="font-['Liberation_Mono',monospace] text-[10px]">
                (<u>{m.hotkey}</u>)
              </span>
            )}
          </button>
        ))}
      </nav>
      <Toolbar />

      <div className="border-r-2 border-l-2 border-r-[#e8e8e8] border-l-[#8c8c8c]">
        <main className="flex items-start">
          <aside className="w-[18px] shrink-0 pl-px">
            <button aria-label="收起" className="flex h-[17px] w-[16px] items-center justify-center bg-[#c0c0c0]">
              <svg width="14" height="13" viewBox="0 0 14 13">
                <path d="M0 5h4V2l5 4.500L4 11V8H0z" fill="#a00000" />
                <path d="M10.500 0.500h2v12h-2z" fill="#f08080" stroke="#c00000" />
              </svg>
            </button>
            {sideTabs.map((tab) => (
              <button
                key={tab}
                className="mt-px flex h-[60px] w-[17px] justify-center bg-[#808080] pt-[5px] text-[12px] leading-[16px] font-bold text-black [clip-path:polygon(0_0,100%_0,100%_100%,0_calc(100%-6px))] last:h-[63px]"
              >
                <span className="[writing-mode:vertical-rl]">{tab}</span>
              </button>
            ))}
          </aside>

          <section className="min-w-0 flex-1">
            <h2 className="h-[19px] border-b border-[#b40000] pl-px font-['Liberation_Serif','Noto_Sans_CJK_SC',serif] text-[12px] leading-[18px] font-bold text-[#c0c0c0]">
              60分钟 K线 MACD RSI
            </h2>
            <Charts />
            <div className="flex h-[15px] pl-[5px]">
              {indicators.map((name) => (
                <button
                  key={name}
                  className={clsx(
                    "h-[14px] pr-[5px] pl-[9px] text-[11px] leading-[14px] font-bold [clip-path:polygon(0_0,calc(100%-1px)_0,calc(100%-3px)_100%,6px_100%)]",
                    name === "RSI" ? "bg-[#800000] text-[#a0ffff]" : "bg-[#808080] text-black"
                  )}
                >
                  {name}
                </button>
              ))}
            </div>
          </section>

          <aside className="w-[261px] shrink-0">
            <div className="border border-white">
              <div className="flex h-[55px] flex-col items-center text-center">
                <h2 className="text-[16px] leading-[28px] text-[#ffff00]">欧元/美元</h2>
                <p className="text-[14px] leading-[26px] font-bold text-[#c0c0c0]">EURUSD</p>
              </div>
              <table className="w-full border-collapse">
                {quotes.map((group, i) => (
                  <tbody key={i} className="border-t border-[#c80000]">
                    {group.map((q) => (
                      <tr key={q.label} className={i < 2 ? "h-[27px]" : "h-[26px]"}>
                        <th scope="row" className="pl-px text-left text-[16px] leading-[24px] font-normal text-[#c0c0c0]">
                          {q.label}
                        </th>
                        <td className={clsx("pr-[2px] text-right text-[14px] leading-[24px] font-bold", q.color)}>{q.value}</td>
                      </tr>
                    ))}
                  </tbody>
                ))}
              </table>
            </div>
            <DayChart />
          </aside>
        </main>
        <StatusBar />
      </div>
      <div className="h-px bg-[#b9d1ea]" />

      <DrawDialog />
      <div className="absolute top-[580px] -right-[28px] flex size-[48px] items-center rounded-full border-2 border-[#d8d8d8] bg-radial from-[#7be07b] to-[#2fae3c] pl-[4px] text-[13px] font-bold text-white">
        60
      </div>
    </div>
  );
}
